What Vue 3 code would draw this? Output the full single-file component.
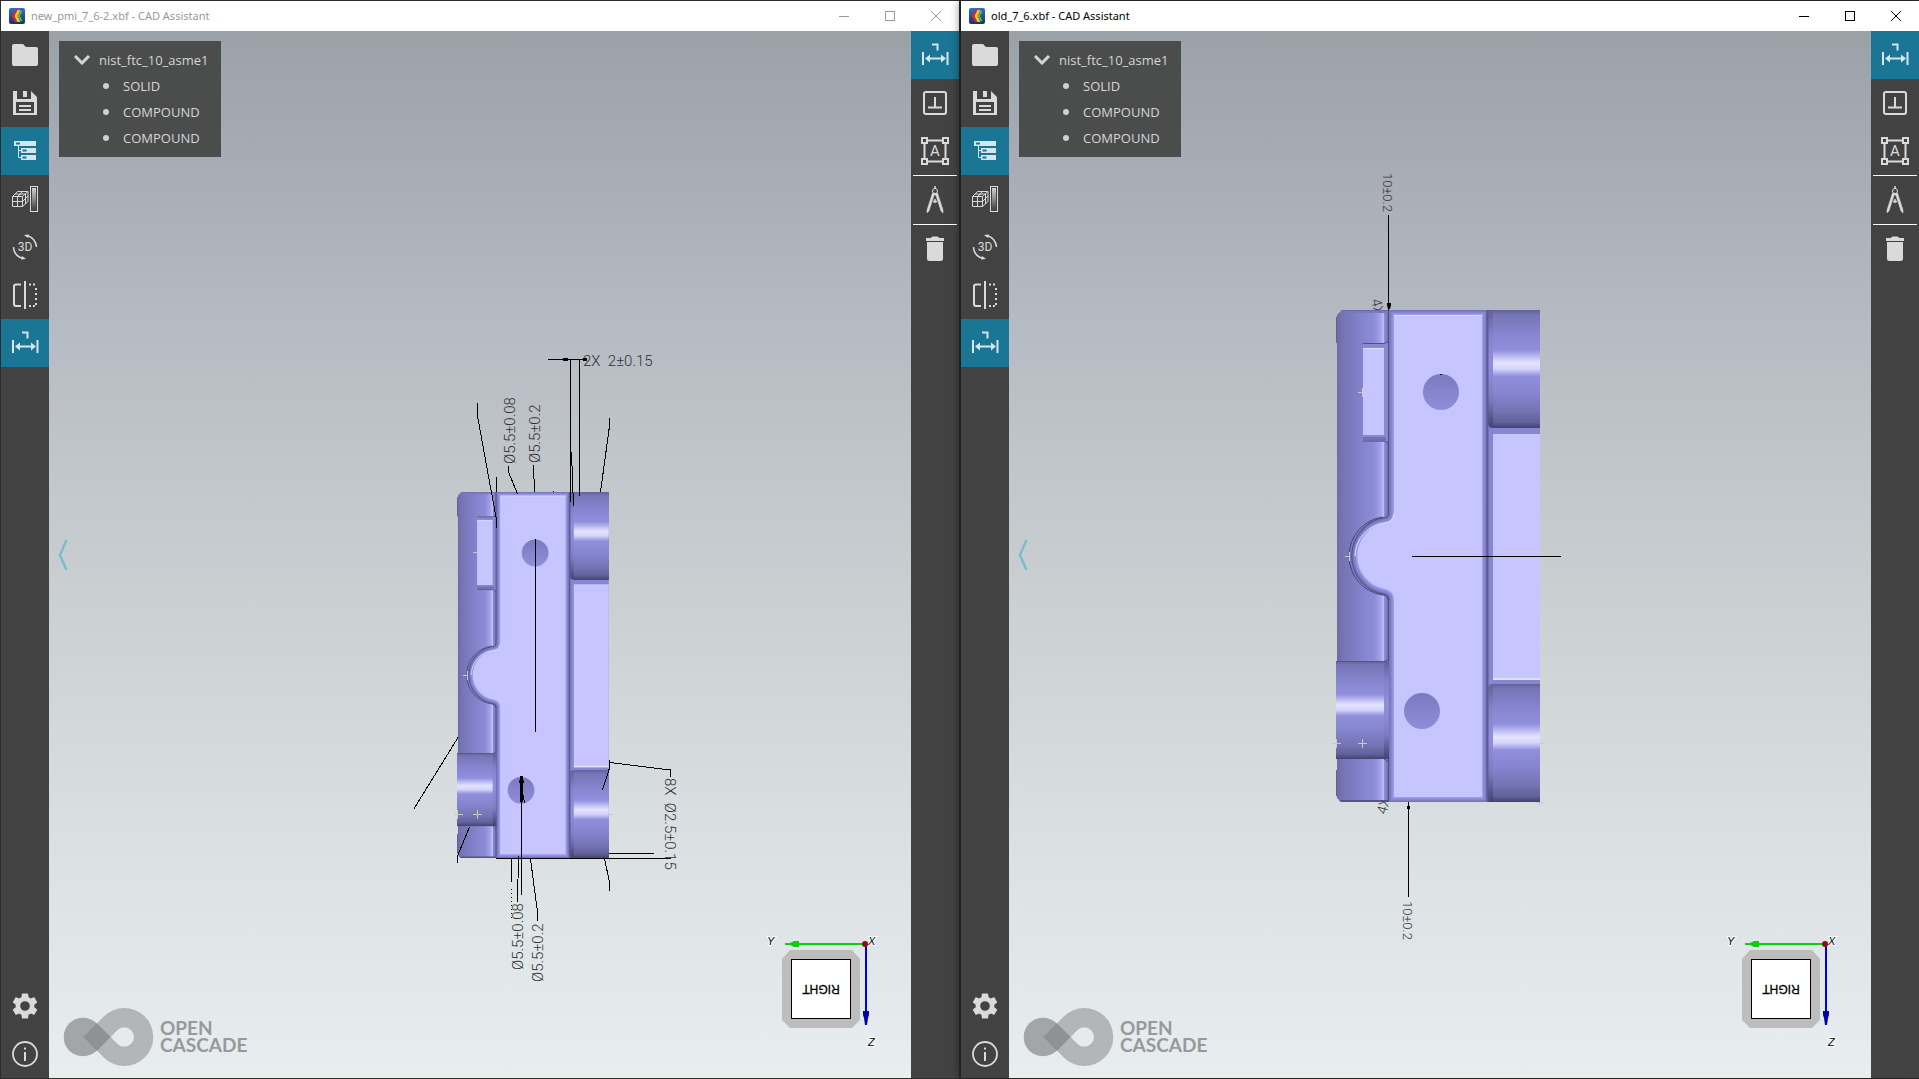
<script setup>
const leftTools = [
  { icon: 'folder', label: 'Open' },
  { icon: 'save', label: 'Save' },
  { icon: 'tree', label: 'Model tree', active: true },
  { icon: 'display', label: 'Display mode' },
  { icon: 'rotate', label: 'View orientation', glyph: '3D', size: 12, base: 28 },
  { icon: 'section', label: 'Clipping planes' },
  { icon: 'dimension', label: 'Measurements', active: true }
]
const bottomTools = [
  { icon: 'gear', label: 'Settings' },
  { icon: 'info', label: 'About' }
]
const rightTools = [
  { icon: 'dimension', label: 'Dimensions', active: true },
  { icon: 'datum', label: 'Datums' },
  { icon: 'note', label: 'Notes', glyph: 'A', size: 15, base: 29 },
  { icon: 'compass', label: 'Measure', split: true },
  { icon: 'trash', label: 'Delete', split: true }
]
const parts = ['SOLID', 'COMPOUND', 'COMPOUND']

const windows = [
  {
    title: 'new_pmi_7_6-2.xbf - CAD Assistant',
    focused: false,
    viewBox: '49 31 862 1047',
    place: 'translate(457 492) scale(0.744)',
    behind: [],
    crosses: 'M473 552.5h4M463 675.5h4M467.5 671v9M472.5 814.5h9M477.5 810v9M453.5 814.5h9M457.5 810v9M609 814.5h4M609.5 858v4',
    lines: [
      'M548 359.5H587M570.5 359V502M579.5 359V496M571.5 452L573.5 506',
      'M477.5 403V416L496.5 520V528M496.5 477V492',
      'M508.5 466V472L517.5 494M533.5 465L534.5 492M553 491.5h1',
      'M609.5 418V426L600.5 492M535.5 539V732',
      'M458 737.5L413.5 809.5M469.5 827L457.5 856V863',
      'M521.5 776V895M522.5 785L523 795L524.5 803M511.5 859V882',
      'M518.5 856L517.5 902M530.5 859L537.5 912V921',
      'M496 858.5H671M609 853.5H654M604.5 859L609.5 882V891',
      'M609.5 760V768L602.5 790M609.5 762.5L670.5 770V777'
    ],
    dots: 'M511.5 889V921',
    solids: 'M563 358h5v3h-5zM583 358h4v3h-4zM520 776h3v26h-3zM519 781l2.500 -4l2.500 4v2h-5z',
    labels: [
      { text: '2X  2±0.15', x: 583, y: 366, turn: 0, size: 15 },
      { text: 'Ø5.5±0.08', x: 515, y: 464, turn: -90, size: 15 },
      { text: 'Ø5.5±0.2', x: 540, y: 463, turn: -90, size: 15 },
      { text: 'Ø5.5±0.08', x: 523, y: 970, turn: -90, size: 15 },
      { text: 'Ø5.5±0.2', x: 543, y: 982, turn: -90, size: 15 },
      { text: '8X  Ø2.5±0.15', x: 665, y: 778, turn: 90, size: 15 }
    ]
  },
  {
    title: 'old_7_6.xbf - CAD Assistant',
    focused: true,
    viewBox: '1009 31 862 1047',
    place: 'translate(1336 310)',
    behind: [
      { text: '4X', x: 1371, y: 300, turn: 75, size: 14 },
      { text: '4X', x: 1386, y: 815, turn: -75, size: 14 }
    ],
    crosses: 'M1358 392.500h5M1362.500 388v9M1345 556.500h4M1349.500 552v9M1358 743.500h9M1362.500 739v9M1332 743.500h9M1336.500 739v9M1540 743.500h4M1535 802.500h9M1539.500 802v4',
    lines: ['M1388.500 215V310M1408.500 802V897M1412 556.500H1561', 'M1440 374.500h2'],
    dots: '',
    solids: 'M1387 303h4v2l-1 4h-2l-1 -4zM1407 806h3v3h-3z',
    labels: [
      { text: '10±0.2', x: 1383, y: 173, turn: 90, size: 13 },
      { text: '10±0.2', x: 1403, y: 901, turn: 90, size: 13 }
    ]
  }
]
const turned = (l) => `translate(${l.x} ${l.y}) rotate(${l.turn})`
</script>

<template>
  <svg class="library" aria-hidden="true">
    <defs>
      <linearGradient id="column" x1="0" x2="1" y1="0" y2="0">
        <stop offset="0" stop-color="#6a6aa4" /><stop offset="0.1" stop-color="#7473b2" />
        <stop offset="0.45" stop-color="#8281ca" /><stop offset="0.72" stop-color="#8d8cd9" />
        <stop offset="0.84" stop-color="#a3a2e9" /><stop offset="0.9" stop-color="#bebdf8" />
        <stop offset="0.91" stop-color="#8f8edb" /><stop offset="1" stop-color="#6968a6" />
      </linearGradient>
      <linearGradient id="boss" x1="0" x2="0" y1="0" y2="1">
        <stop offset="0" stop-color="#62619a" /><stop offset="0.04" stop-color="#7675b6" />
        <stop offset="0.2" stop-color="#8685cf" /><stop offset="0.34" stop-color="#918fdd" />
        <stop offset="0.42" stop-color="#d0cff9" /><stop offset="0.45" stop-color="#e4e3ff" />
        <stop offset="0.5" stop-color="#d4d3fb" /><stop offset="0.56" stop-color="#918fdd" />
        <stop offset="0.7" stop-color="#8685cf" /><stop offset="0.86" stop-color="#7473b4" />
        <stop offset="0.95" stop-color="#62619a" /><stop offset="1" stop-color="#434270" />
      </linearGradient>
      <linearGradient id="shade" x1="0" x2="0" y1="0" y2="1">
        <stop offset="0" stop-color="#62619a" /><stop offset="0.2" stop-color="#8281ca" />
        <stop offset="0.45" stop-color="#918fdd" /><stop offset="0.75" stop-color="#7d7cc2" />
        <stop offset="1" stop-color="#434270" />
      </linearGradient>
      <linearGradient id="hole" x1="0" x2="0" y1="0" y2="1">
        <stop offset="0" stop-color="#7b7abf" /><stop offset="1" stop-color="#8f8eda" />
      </linearGradient>
      <linearGradient id="ramp" x1="0" x2="0" y1="0" y2="1">
        <stop offset="0" stop-color="#d0d0d0" /><stop offset="1" stop-color="#424242" />
      </linearGradient>
      <linearGradient id="badge" x1="0" x2="0" y1="0" y2="1">
        <stop offset="0" stop-color="#2f72c4" /><stop offset="1" stop-color="#12355f" />
      </linearGradient>
      <clipPath id="outline"><path d="M6 0H204V492H5L1 488V5Z" /></clipPath>
      <path id="face" d="M58 5H146V487H58V290Q58 281 49 279A33.500 33.500 0 0 1 49 213Q58 212 58 203Z" />
    </defs>

    <symbol id="solid" viewBox="0 0 204 492" overflow="visible">
      <path d="M0 7h2v26h-2zM0 460h2v26h-2z" fill="#62619a" />
      <g clip-path="url(#outline)">
        <rect width="53" height="492" fill="url(#column)" />
        <path d="M0 0.500H60" stroke="#6a6aa4" />
        <path d="M0 2H56" stroke="#7a79be" stroke-width="2" />
        <path d="M0 491H56" stroke="#55548a" stroke-width="2" />
        <rect x="27" y="33" width="26" height="99" fill="#8988d3" />
        <path d="M27 33.500H48Q52 33 53 30M27 131H48Q52 131 53 135" fill="none" stroke="#4f4f82" />
        <path d="M27 128.500H50" stroke="#7271b3" stroke-width="3" />
        <rect x="27" y="38" width="21" height="87" fill="#c6c5ff" />
        <path d="M27 38.500H48" stroke="#e4e3ff" />
        <use href="#face" stroke="#50507f" stroke-width="12" />
        <use href="#face" stroke="#7675b8" stroke-width="10" />
        <use href="#face" stroke="#8786d2" stroke-width="7" />
        <use href="#face" stroke="#9c9be6" stroke-width="3" />
        <use href="#face" fill="#c6c5ff" />
        <path d="M19 246A33.500 33.500 0 0 1 49 213Q57 212 58 204" fill="none" stroke="#e4e3ff" />
        <path d="M58 5.500H146" stroke="#dad9ff" />
        <path d="M13 246A39 39 0 0 1 47 207M13 246A39 39 0 0 0 47 285Q52 285 53 290" fill="none" stroke="#45446f" />
      </g>
      <rect y="351" width="53" height="98" fill="url(#shade)" />
      <rect y="351" width="48" height="98" fill="url(#boss)" />
      <path d="M0 351.500H48Q52 351 53 348M48 449Q52 450 53 454" fill="none" stroke="#55548a" />
      <rect x="152" width="52" height="492" fill="#8786d2" />
      <path d="M152 0H204V118H157Q152 118 152 113Z" fill="url(#shade)" />
      <rect x="157" width="47" height="118" fill="url(#boss)" />
      <path d="M152 379Q152 374 157 374H204V492H152Z" fill="url(#shade)" />
      <rect x="157" y="374" width="47" height="118" fill="url(#boss)" />
      <rect x="157" y="124" width="47" height="246" fill="#c6c5ff" />
      <path d="M157 369H204" stroke="#e4e3ff" stroke-width="2" />
      <path d="M151.500 0V492" stroke="#5b5a92" stroke-width="2" />
      <circle cx="105" cy="82" r="18" fill="url(#hole)" />
      <circle cx="86" cy="401" r="18" fill="url(#hole)" />
    </symbol>

    <symbol id="folder" viewBox="0 0 48 48">
      <path d="M13 13h9l3 3h10q2 0 2 2v15q0 2 -2 2H13q-2 0 -2 -2V15q0 -2 2 -2z" fill="currentColor" />
    </symbol>
    <symbol id="save" viewBox="0 0 48 48">
      <path fill-rule="evenodd" d="M12 12h4v8h14v-8l6 6v18H12zM22 12h4v6h-4zM15 23v11h18V23z" fill="currentColor" />
      <path d="M18 26h12v2h-12zM18 30h12v2h-12z" fill="currentColor" />
    </symbol>
    <symbol id="tree" viewBox="0 0 48 48">
      <path d="M13 14h22v5H13zM20 21h15v5H20zM20 28h15v5H20z" fill="currentColor" />
      <path d="M17.500 19v11.500H20M17.500 23.500H20" fill="none" stroke="currentColor" />
      <path d="M15 15.500h4v2h-4zM21.500 22.500h4v2h-4zM21.500 29.500h4v2h-4z" fill="#1b7595" />
    </symbol>
    <symbol id="display" viewBox="0 0 48 48">
      <path d="M11.500 21.500h10v10h-10zM11.500 26.500h10M16.500 31.500v-10l5 -5M11.500 21.500l5 -5h10.500v10l-5.500 5M14 19h10.500v10M21.500 21.500l5.500 -5M21.500 26.500l5.500 -5.500M21.500 16.500l-4.500 5" fill="none" stroke="currentColor" />
      <rect x="29.500" y="11.500" width="7" height="25" fill="none" stroke="currentColor" />
      <rect x="31" y="13" width="4" height="22" fill="url(#ramp)" />
    </symbol>
    <symbol id="rotate" viewBox="0 0 48 48">
      <path d="M26 12.500Q34.500 15 35.500 24M22 35.500Q13 33 12.500 24" fill="none" stroke="currentColor" stroke-width="1.500" />
      <path d="M23 12l5 -0.500l-1 3.500zM25 36l-5 0.500l1 -3.500z" fill="currentColor" />
    </symbol>
    <symbol id="section" viewBox="0 0 48 48">
      <path d="M20 13.500H15Q13 13.500 13 15.500V33Q13 35 15 35H20M24 10V38" fill="none" stroke="currentColor" stroke-width="2" />
      <path d="M28 12.500h2v2h-2zM32 12.500h2v2h-2zM34 17h2v2h-2zM34 22h2v2h-2zM34 27h2v2h-2zM34 32h2v2h-2zM28 34h2v2h-2zM32 34h2v2h-2z" fill="currentColor" />
    </symbol>
    <symbol id="dimension" viewBox="0 0 48 48">
      <path d="M12 21v13M36.500 21v13M16 27.500h17M21 13.500h5.500v6" fill="none" stroke="currentColor" stroke-width="2" />
      <path d="M14 27.500l5 -4v8zM35 27.500l-5 -4v8z" fill="currentColor" />
    </symbol>
    <symbol id="datum" viewBox="0 0 48 48">
      <rect x="13" y="13" width="22" height="22" rx="2" fill="none" stroke="currentColor" stroke-width="2" />
      <path d="M24 18v10M17 28.500h14" fill="none" stroke="currentColor" stroke-width="2" />
    </symbol>
    <symbol id="note" viewBox="0 0 48 48">
      <path d="M17 13.500H31M17 34.500H31M13.500 17V31M34.500 17V31" stroke="currentColor" stroke-width="2" />
      <path d="M11 11h5v5h-5zM32 11h5v5h-5zM11 32h5v5h-5zM32 32h5v5h-5z" fill="none" stroke="currentColor" stroke-width="2" />
    </symbol>
    <symbol id="compass" viewBox="0 0 48 48">
      <circle cx="24" cy="15" r="2.500" fill="none" stroke="currentColor" />
      <path d="M24 10v3M21 18.500h6M22 25.500h4M24 23v4" fill="none" stroke="currentColor" stroke-width="1.500" />
      <path d="M21.500 17l2 1l-5.500 17l-2 2l0 -3zM26.500 17l-2 1l5.500 17l2 2l0 -3z" fill="currentColor" stroke="currentColor" stroke-width="0.500" />
    </symbol>
    <symbol id="trash" viewBox="0 0 48 48">
      <path d="M15 13h4.500l2 -1.500h5l2 1.500H33v3H15zM16 17h16v16.500q0 2.500 -2.500 2.500h-11q-2.500 0 -2.500 -2.500z" fill="currentColor" />
    </symbol>
    <symbol id="gear" viewBox="0 0 48 48">
      <path transform="translate(8.400 8.400) scale(1.300)" d="M19.140 12.940c.04-.3.060-.61.060-.94s-.02-.64-.07-.94l2.030-1.580a.49.490 0 0 0 .12-.61l-1.920-3.320a.488.488 0 0 0-.59-.22l-2.390.96a7.030 7.030 0 0 0-1.620-.94l-.36-2.540a.484.484 0 0 0-.48-.41h-3.840a.48.480 0 0 0-.47.410l-.36 2.540c-.59.240-1.130.57-1.620.94l-2.390-.96a.48.480 0 0 0-.59.220L2.740 8.870a.48.480 0 0 0 .12.610l2.030 1.580c-.05.300-.09.630-.09.940s.02.640.07.940l-2.030 1.580a.49.490 0 0 0-.12.610l1.920 3.320c.12.220.37.290.59.220l2.390-.96c.5.380 1.030.7 1.620.94l.36 2.540c.05.240.24.410.48.410h3.840c.24 0 .44-.17.470-.41l.36-2.540c.59-.24 1.130-.56 1.620-.94l2.390.96c.22.080.47 0 .59-.22l1.920-3.320a.47.470 0 0 0-.12-.61zM12 15.700a3.700 3.700 0 1 1 0-7.400a3.700 3.700 0 0 1 0 7.400z" fill="currentColor" />
    </symbol>
    <symbol id="info" viewBox="0 0 48 48">
      <circle cx="24" cy="24" r="12" fill="none" stroke="currentColor" stroke-width="1.800" />
      <path d="M23 17.500h2v2h-2zM23 22h2v9h-2z" fill="currentColor" />
    </symbol>
  </svg>

  <main class="desktop">
    <section v-for="w in windows" :key="w.title" class="window" :class="{ focused: w.focused }">
      <header class="titlebar">
        <svg class="badge" width="16" height="16" viewBox="0 0 16 16" aria-hidden="true">
          <rect width="16" height="16" rx="2" fill="url(#badge)" />
          <path d="M6 2L2.500 8L6 14H8.500L5.500 8L8.500 2Z" fill="#d9203c" />
          <path d="M8.500 2L5.500 8L8.500 14H11.500L8.500 8L11.500 2Z" fill="#f5c531" />
          <path d="M11.500 3L8.500 8L11.500 13H13.500L11 8L13.500 3Z" fill="#6cb33f" />
        </svg>
        <h1 class="title">{{ w.title }}</h1>
        <button class="control" aria-label="Minimize">
          <svg width="10" height="10" viewBox="0 0 10 10"><path d="M0 5.500H10" stroke="currentColor" /></svg>
        </button>
        <button class="control" aria-label="Maximize">
          <svg width="10" height="10" viewBox="0 0 10 10"><rect x="0.500" y="0.500" width="9" height="9" fill="none" stroke="currentColor" /></svg>
        </button>
        <button class="control" aria-label="Close">
          <svg width="10" height="10" viewBox="0 0 10 10"><path d="M0 0L10 10M10 0L0 10" stroke="currentColor" /></svg>
        </button>
      </header>

      <div class="body">
        <nav class="toolbar">
          <button v-for="t in leftTools" :key="t.icon" class="tool" :class="{ active: t.active }" :aria-label="t.label">
            <svg width="48" height="48">
              <use :href="'#' + t.icon" />
              <text v-if="t.glyph" x="24" :y="t.base" class="glyph" :font-size="t.size">{{ t.glyph }}</text>
            </svg>
          </button>
          <span class="spacer"></span>
          <button v-for="t in bottomTools" :key="t.icon" class="tool" :aria-label="t.label">
            <svg width="48" height="48"><use :href="'#' + t.icon" /></svg>
          </button>
        </nav>

        <div class="viewport">
          <svg class="scene" :viewBox="w.viewBox">
            <text v-for="l in w.behind" :key="l.y" class="dim" :font-size="l.size" :transform="turned(l)">{{ l.text }}</text>
            <g :transform="w.place"><use href="#solid" width="204" height="492" /></g>
            <path :d="w.crosses" class="cross" />
            <path v-for="d in w.lines" :key="d" :d="d" class="line" />
            <path :d="w.dots" class="line dotted" />
            <path :d="w.solids" />
            <text v-for="l in w.labels" :key="l.x + l.text" class="dim" :font-size="l.size" :transform="turned(l)">{{ l.text }}</text>
          </svg>

          <div class="tree">
            <button class="node">
              <svg width="16" height="10" viewBox="0 0 16 10" aria-hidden="true"><path d="M1 1L8 8L15 1" fill="none" stroke="currentColor" stroke-width="3" /></svg>
              nist_ftc_10_asme1
            </button>
            <ul class="parts">
              <li v-for="(p, i) in parts" :key="i" class="part">{{ p }}</li>
            </ul>
          </div>

          <button class="collapse" aria-label="Collapse panel">
            <svg width="10" height="32" viewBox="0 0 10 32"><path d="M8.500 1L2 16L8.500 31" fill="none" stroke="currentColor" stroke-width="2.500" /></svg>
          </button>

          <svg class="logo" width="190" height="60" viewBox="0 0 190 60">
            <path fill-rule="evenodd" d="M20.300 30L40.800 9.500A29 29 0 1 1 40.800 50.500ZM47.600 30L54.500 36.900A9.700 9.700 0 1 0 54.500 23.100Z" fill="#b3b5b6" />
            <circle cx="20" cy="30" r="19.300" fill="#a3a5a6" />
            <path d="M20.300 30L34 16.300L47.600 30L34 43.700Z" fill="#8f9192" />
            <text x="97" y="28" class="brand">OPEN</text>
            <text x="97" y="45" class="brand">CASCADE</text>
          </svg>

          <svg class="cube" width="120" height="122" viewBox="0 0 120 122">
            <path d="M30 20H92L100 29V90L92 98H30L22 90V29Z" fill="#bdbdbd" />
            <rect x="31.500" y="29.500" width="59" height="59" fill="#fff" stroke="#000" />
            <text class="side" text-anchor="middle" transform="translate(61 55) rotate(180)">RIGHT</text>
            <path d="M35 14H104" stroke="#0bd00b" stroke-width="2" />
            <path d="M25 13h5l4 -2h5v6h-5l-4 -2h-5z" fill="#0bd00b" />
            <path d="M106 16V84" stroke="#0000d8" stroke-width="2" />
            <path d="M103 81h6v4l-1 3l-1 7h-2l-1 -7l-1 -3z" fill="#0000b0" />
            <text x="7" y="15" class="axis">Y</text>
            <text x="108" y="15" class="axis">X</text>
            <text x="108" y="116" class="axis">Z</text>
            <circle cx="105" cy="14" r="3" fill="#8b0f0f" />
          </svg>
        </div>

        <nav class="toolbar">
          <button v-for="t in rightTools" :key="t.icon" class="tool" :class="{ active: t.active, split: t.split }" :aria-label="t.label">
            <svg width="48" height="48">
              <use :href="'#' + t.icon" />
              <text v-if="t.glyph" x="24" :y="t.base" class="glyph" :font-size="t.size">{{ t.glyph }}</text>
            </svg>
          </button>
        </nav>
      </div>
    </section>
  </main>
</template>

<style>
body { margin: 0; }
</style>

<style scoped>
.library { position: absolute; width: 0; height: 0; }
.desktop {
  display: grid;
  grid-template-columns: 1fr 1fr;
  gap: 2px;
  box-sizing: border-box;
  height: 100vh;
  padding: 1px 0 1px 1px;
  background: #2e2c2d;
  font-family: "Open Sans", "Noto Sans", sans-serif;
}
.window { display: flex; flex-direction: column; min-width: 0; }
.focused { position: relative; box-shadow: -2px 0 8px rgba(0, 0, 0, 0.4); }
button { padding: 0; border: 0; background: none; color: inherit; font: inherit; }
.titlebar { display: flex; align-items: center; height: 30px; padding-left: 8px; background: #fff; color: #999; }
.focused .titlebar { color: #000; }
.title { flex: 1; margin: 0 0 0 6px; font-family: "Noto Sans", sans-serif; font-size: 11px; font-weight: 400; line-height: 30px; }
.control { display: flex; align-items: center; justify-content: center; width: 46px; height: 30px; }
.body { display: flex; flex: 1; min-height: 0; }
.toolbar { display: flex; flex-direction: column; width: 48px; background: #424242; color: #dadada; }
.tool { height: 48px; }
.tool svg { display: block; }
.tool.active { background: #1b7595; color: #d4e7ed; }
.tool.split { height: 49px; }
.tool.split::before { content: ""; display: block; height: 1px; margin: 0 2px; background: #fff; }
.spacer { flex: 1; }
.glyph { font-family: Roboto, sans-serif; fill: currentColor; text-anchor: middle; }
.viewport {
  position: relative;
  flex: 1;
  min-width: 0;
  background: linear-gradient(#9aa2a8, #a9adb6 14%, #b6bac3 28%, #c0c5c9 40%, #cdd2d5 58%, #dbe0e2 78%, #e8eef0);
}
.scene { position: absolute; width: 100%; height: 100%; }
.line { fill: none; stroke: #000; shape-rendering: crispEdges; }
.dotted { stroke-dasharray: 1 3; }
.cross { fill: none; stroke: #c9cac4; shape-rendering: crispEdges; }
.dim { font-family: Roboto, sans-serif; font-weight: 300; fill: #303234; white-space: pre; }
.tree {
  position: absolute;
  top: 10px;
  left: 10px;
  box-sizing: border-box;
  width: 162px;
  padding: 6px 0 6px 15px;
  background: #4b4c4c;
  color: #d6d6d6;
  font-size: 13px;
  line-height: 26px;
}
.node { display: flex; align-items: center; gap: 9px; }
.parts { margin: 0; padding: 0 0 0 29px; list-style: none; }
.part { display: flex; align-items: center; gap: 14px; }
.part::before { content: ""; width: 6px; height: 6px; border-radius: 50%; background: #d0d0d0; }
.collapse { position: absolute; top: calc(50% - 16px); left: 9px; height: 32px; color: #7dbbd0; }
.collapse svg { display: block; }
.logo { position: absolute; bottom: 11px; left: 14px; }
.brand { font-family: Lato, sans-serif; font-size: 19px; font-weight: 700; fill: #97999a; }
.cube { position: absolute; right: 31px; bottom: 26px; }
.side { font-family: "Liberation Sans", sans-serif; font-size: 12px; fill: #000; stroke: #000; stroke-width: 0.3px; }
.axis { font-family: "Liberation Sans", sans-serif; font-size: 11px; font-style: italic; fill: #000; paint-order: stroke; stroke: #fff; stroke-width: 2px; }
</style>
